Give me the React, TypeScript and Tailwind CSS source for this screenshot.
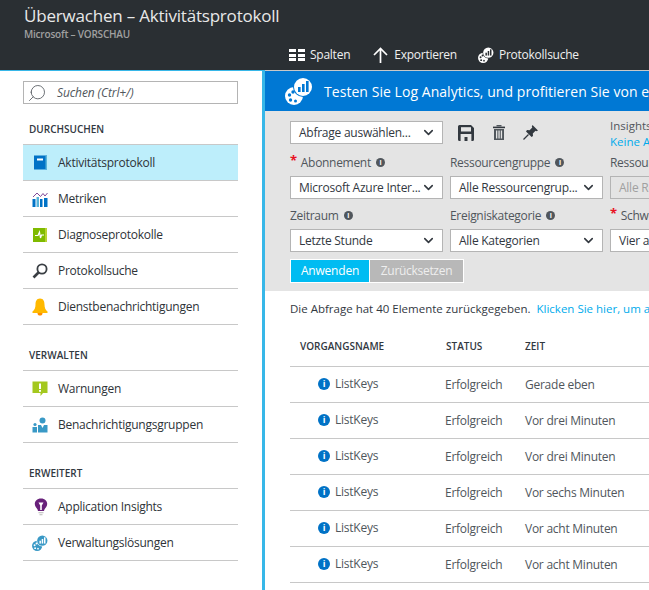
import React from 'react';
import { ChevronDown, Search } from 'lucide-react';

// Log Analytics Symbol: Palette mit Diagramm-Blase
const LogIcon = ({ size, bubble, bars }: { size: number; bubble: string; bars: string }) => (
  <svg width={size} height={size} viewBox="0 0 28 28" className="shrink-0">
    <circle cx="9" cy="19" r="9" fill={bubble} />
    <circle cx="4.5" cy="18" r="1.7" fill={bars} />
    <circle cx="8" cy="15" r="1.7" fill={bars} />
    <circle cx="5.5" cy="23" r="1.7" fill={bars} />
    <circle cx="10.5" cy="24" r="1.5" fill={bars} />
    <circle cx="18" cy="10" r="10" fill={bars} />
    <circle cx="18" cy="10" r="9" fill={bubble} />
    <rect x="13" y="10" width="2.6" height="5" fill={bars} />
    <rect x="17" y="7" width="2.6" height="8" fill={bars} />
    <rect x="21" y="4" width="2.6" height="11" fill={bars} />
  </svg>
);

const BookIcon = () => (
  <svg width="15" height="15" viewBox="0 0 15 15">
    <rect x="1" y="0.5" width="13" height="14" fill="#0072c6" />
    <rect x="12.5" y="0.5" width="1.5" height="14" fill="#59b4d9" />
    <rect x="4" y="3.5" width="6" height="2" fill="#fff" />
  </svg>
);

const MetricsIcon = () => (
  <svg width="16" height="16" viewBox="0 0 16 16">
    <rect x="0.5" y="8" width="3" height="8" fill="#0072c6" />
    <rect x="4.5" y="6" width="2.5" height="10" fill="#59b4d9" />
    <rect x="8" y="8" width="2.5" height="8" fill="#0072c6" />
    <rect x="12" y="7" width="3.5" height="9" fill="#0072c6" />
    <path d="M1 6 L5 2 L8.5 5.5 L11 2.5 L13 5 L15.5 2" fill="none" stroke="#804998" strokeWidth="1" />
  </svg>
);

const DiagnoseIcon = () => (
  <svg width="16" height="16" viewBox="0 0 16 16">
    <rect x="1" y="1" width="14" height="14" fill="#7fba00" />
    <rect x="13" y="1" width="2" height="14" fill="#b8d432" />
    <path d="M3 8.5 H6 L7.5 5 L8.5 11 L9.5 8 H12" fill="none" stroke="#fff" strokeWidth="1.2" />
  </svg>
);

const LoupeIcon = () => (
  <svg width="16" height="16" viewBox="0 0 16 16">
    <circle cx="10" cy="6" r="4.6" fill="#fff" stroke="#3a3f44" strokeWidth="1.8" />
    <path d="M6.5 9.5 L1.5 14.5" stroke="#3a3f44" strokeWidth="2.6" />
  </svg>
);

const BellIcon = () => (
  <svg width="16" height="18" viewBox="0 0 16 18">
    <path d="M8 0.5 C4.5 0.5 3.5 3.5 3.5 6.5 C3.5 10 2.5 12 0.5 13.5 V15 H15.5 V13.5 C13.5 12 12.5 10 12.5 6.5 C12.5 3.5 11.5 0.5 8 0.5 Z" fill="#ffb900" />
    <path d="M5.5 15 C5.5 17 6.5 17.5 8 17.5 C9.5 17.5 10.5 17 10.5 15 Z" fill="#ff8c00" />
  </svg>
);

const WarnIcon = () => (
  <svg width="16" height="16" viewBox="0 0 16 16">
    <path d="M0.5 0.5 H15.5 V12 H11 L8.5 15 V12 H0.5 Z" fill="#a4c81e" />
    <rect x="7" y="2.5" width="2" height="5.5" fill="#fff" />
    <rect x="7" y="9" width="2" height="1.8" fill="#fff" />
  </svg>
);

const GroupIcon = () => (
  <svg width="16" height="16" viewBox="0 0 16 16">
    <circle cx="10.5" cy="3.5" r="3" fill="#3999c6" />
    <path d="M6 8 H15.5 V15.5 H6 Z" fill="#3999c6" />
    <path d="M9 8 L10.5 11 L12 8 Z" fill="#fff" />
    <circle cx="3" cy="7.5" r="1.6" fill="#3999c6" />
    <rect x="0.5" y="10" width="4.5" height="5.5" fill="#3999c6" />
  </svg>
);

const BulbIcon = () => (
  <svg width="14" height="18" viewBox="0 0 14 18">
    <path d="M7 0.5 C3 0.5 0.8 3 0.8 6 C0.8 9 3.5 10 4 13 H10 C10.5 10 13.2 9 13.2 6 C13.2 3 11 0.5 7 0.5 Z" fill="#68217a" />
    <path d="M4.5 4.5 H9.5 L7.8 7.5 V12 H6.2 V7.5 Z" fill="#fff" />
    <rect x="4.5" y="14" width="5" height="1.3" fill="#c8c8c8" />
    <rect x="5.5" y="16" width="3" height="1.3" fill="#c8c8c8" />
  </svg>
);

// Werkzeugleiste im Filterbereich
const SaveIcon = () => (
  <svg width="16" height="16" viewBox="0 0 16 16" className="shrink-0">
    <path d="M1.5 0 H13 L16 3 V14.5 A1.5 1.5 0 0 1 14.5 16 H1.5 A1.5 1.5 0 0 1 0 14.5 V1.5 A1.5 1.5 0 0 1 1.5 0 Z" fill="#32383f" />
    <rect x="3" y="2.2" width="10" height="4.3" fill="#e4e4e4" />
    <rect x="2.6" y="9" width="10.8" height="7" fill="#e4e4e4" />
    <rect x="6.5" y="12" width="3" height="4" fill="#32383f" />
  </svg>
);

const TrashIcon = () => (
  <svg width="12" height="15" viewBox="0 0 12 15" className="shrink-0">
    <rect x="3.5" y="0" width="5" height="1.4" fill="#50565c" />
    <rect x="0" y="1.6" width="12" height="1.6" fill="#32383f" />
    <rect x="1" y="4" width="10" height="11" fill="#50565c" />
    <rect x="3" y="5.5" width="1.3" height="8" fill="#e4e4e4" />
    <rect x="5.4" y="5.5" width="1.3" height="8" fill="#e4e4e4" />
    <rect x="7.8" y="5.5" width="1.3" height="8" fill="#e4e4e4" />
  </svg>
);

const PinIcon = () => (
  <svg width="15" height="15" viewBox="0 0 15 15" className="shrink-0">
    <path d="M9.5 0 L15 5.5 L13.5 6.2 L12.5 5.7 L9.8 8.4 L10 11 L8.6 12 L3 6.4 L4 5 L6.6 5.2 L9.3 2.5 L8.8 1.5 Z" fill="#32383f" />
    <path d="M5.5 9.5 L0.5 14.5" stroke="#32383f" strokeWidth="1.3" />
  </svg>
);

const Row = ({ icon, label, active }: { icon: React.ReactNode; label: string; active?: boolean }) => (
  <div className={`flex h-9 items-center border-b border-[#c8c8c8] ${active ? 'bg-[#bdeefb]' : ''}`}>
    <div className="flex w-[35px] shrink-0 justify-end pr-[10px]">{icon}</div>
    <span className="pt-px text-[12px] tracking-[-0.25px] text-[#2e3338]">{label}</span>
  </div>
);

const Section = ({ title, children }: { title: string; children: React.ReactNode }) => (
  <div>
    <div className="flex h-[23px] items-start border-b border-[#c8c8c8] pl-[6px] text-[10px] leading-[14px] font-semibold text-[#32383f]">
      {title}
    </div>
    {children}
  </div>
);

const Dropdown = ({ value, disabled }: { value: string; disabled?: boolean }) => (
  <div className={`flex h-[23px] w-[153px] shrink-0 items-center justify-between border border-[#b4b4b4] pr-1.5 pl-2 ${disabled ? 'bg-[#e4e4e4]' : 'bg-white'}`}>
    <span className={`text-[12px] tracking-[-0.25px] whitespace-nowrap ${disabled ? 'text-[#a0a0a0]' : 'text-[#32383f]'}`}>{value}</span>
    {!disabled && <ChevronDown size={15} strokeWidth={2.5} className="shrink-0 text-[#32383f]" />}
  </div>
);

const InfoDot = () => (
  <span className="ml-[5px] flex h-[9px] w-[9px] items-center justify-center rounded-full bg-[#50565c] text-[7px] leading-none font-bold text-white">i</span>
);

const Label = ({ text, required, info = true }: { text: string; required?: boolean; info?: boolean }) => (
  <div className="flex h-[23px] w-[153px] shrink-0 items-center text-[12px] tracking-[-0.3px] whitespace-nowrap text-[#50565c]">
    {required && <span className="mr-1 -translate-y-0.5 text-[13px] leading-none font-bold text-[#e81123]">*</span>}
    {text}
    {info && <InfoDot />}
  </div>
);

const rows = ['Gerade eben', 'Vor drei Minuten', 'Vor drei Minuten', 'Vor sechs Minuten', 'Vor acht Minuten', 'Vor acht Minuten'];

export default function App() {
  return (
    <div className="flex h-[590px] w-[649px] flex-col overflow-hidden bg-white font-['Open_Sans','Liberation_Sans',sans-serif]">
      {/* Kopfzeile */}
      <header className="h-[71px] shrink-0 border-b border-[#c8c8c8] bg-[#2a2f33]">
        <div className="pt-1 pl-6 text-[17px] leading-[24px] tracking-[-0.2px] text-[#e8e8e8]">Überwachen – Aktivitätsprotokoll</div>
        <div className="pl-6 text-[10px] leading-[12px] font-semibold tracking-[-0.2px] text-[#a0a0a0]">Microsoft – VORSCHAU</div>
        <div className="mt-[6px] flex h-[18px] items-center pl-[289px] text-[12px] font-medium tracking-[-0.25px] text-[#f0f0f0]">
          <div className="flex items-center gap-[5px]">
            <div className="grid grid-cols-2 gap-x-[2px] gap-y-[1.5px]">
              <span className="h-[3px] w-[7px] bg-white" />
              <span className="h-[3px] w-[7px] bg-white" />
              <span className="h-[3px] w-[7px] bg-white" />
              <span className="h-[3px] w-[7px] bg-white" />
              <span className="h-[3px] w-[7px] bg-white" />
              <span className="h-[3px] w-[7px] bg-white" />
            </div>
            Spalten
          </div>
          <div className="ml-[23px] flex items-center gap-[6px]">
            <svg width="15" height="16" viewBox="0 0 15 16">
              <path d="M7.5 1.5 V16 M1 8 L7.5 1.5 L14 8" fill="none" stroke="#fff" strokeWidth="1.7" />
            </svg>
            Exportieren
          </div>
          <div className="ml-[21px] flex items-center gap-[5px]">
            <LogIcon size={16} bubble="#ffffff" bars="#2a2f33" />
            Protokollsuche
          </div>
        </div>
      </header>

      <div className="flex min-h-0 flex-1">
        {/* Seitenleiste */}
        <aside className="z-10 -mt-px w-[265px] shrink-0 border-t border-r-[3px] border-[#37b7e8] bg-white pt-[10px] pl-[23px]">
          <div className="w-[215px]">
            <div className="flex h-[23px] items-center border border-[#b4b4b4] pl-[3px]">
              <Search size={20} strokeWidth={1} className="-scale-x-100 text-[#50565c]" />
              <span className="ml-[10px] text-[12px] tracking-[-0.1px] text-[#50565c] italic">Suchen (Ctrl+/)</span>
            </div>
            <div className="mt-[18px]">
              <Section title="DURCHSUCHEN">
                <Row active icon={<BookIcon />} label="Aktivitätsprotokoll" />
                <Row icon={<MetricsIcon />} label="Metriken" />
                <Row icon={<DiagnoseIcon />} label="Diagnoseprotokolle" />
                <Row icon={<LoupeIcon />} label="Protokollsuche" />
                <Row icon={<BellIcon />} label="Dienstbenachrichtigungen" />
              </Section>
            </div>
            <div className="mt-[23px]">
              <Section title="VERWALTEN">
                <Row icon={<WarnIcon />} label="Warnungen" />
                <Row icon={<GroupIcon />} label="Benachrichtigungsgruppen" />
              </Section>
            </div>
            <div className="mt-[23px]">
              <Section title="ERWEITERT">
                <Row icon={<BulbIcon />} label="Application Insights" />
                <Row icon={<LogIcon size={16} bubble="#3999c6" bars="#ffffff" />} label="Verwaltungslösungen" />
              </Section>
            </div>
          </div>
        </aside>

        <main className="min-w-0 flex-1 overflow-hidden">
          {/* Hinweisbanner */}
          <div className="flex h-10 items-center bg-[#0078d4] pl-5 whitespace-nowrap">
            <LogIcon size={28} bubble="#ffffff" bars="#0078d4" />
            <span className="ml-[11px] text-[14px] tracking-[0.05px] text-white">Testen Sie Log Analytics, und profitieren Sie von erweiterten Funktionen</span>
          </div>

          {/* Filter */}
          <div className="h-[180px] bg-[#e4e4e4] pt-[10px] pl-[25px]">
            <div className="flex h-[23px] items-center gap-[7px]">
              <Dropdown value="Abfrage auswählen..." />
              <div className="flex w-[153px] shrink-0 items-center pl-2">
                <SaveIcon />
                <span className="ml-[19px]"><TrashIcon /></span>
                <span className="ml-[18px]"><PinIcon /></span>
              </div>
              <div className="shrink-0 translate-y-px text-[11.5px] leading-[16px] whitespace-nowrap">
                <div className="text-[#50565c]">Insights-Abfragen</div>
                <div className="text-[#00abec]">Keine Abfragen</div>
              </div>
            </div>
            <div className="mt-[7px] flex gap-[7px]">
              <Label required text="Abonnement" />
              <Label text="Ressourcengruppe" />
              <Label text="Ressource" info={false} />
            </div>
            <div className="mt-[2px] flex gap-[7px]">
              <Dropdown value="Microsoft Azure Inter..." />
              <Dropdown value="Alle Ressourcengrup..." />
              <Dropdown value="Alle Ressourcen" disabled />
            </div>
            <div className="mt-[5px] flex gap-[7px]">
              <Label text="Zeitraum" />
              <Label text="Ereigniskategorie" />
              <Label required text="Schweregrad" />
            </div>
            <div className="mt-[2px] flex gap-[7px]">
              <Dropdown value="Letzte Stunde" />
              <Dropdown value="Alle Kategorien" />
              <Dropdown value="Vier ausgewählt" />
            </div>
            <div className="mt-[7px] flex h-6 w-[174px] gap-px bg-white p-px">
              <div className="flex w-[78px] items-center justify-center bg-[#00bcf2] text-[12px] font-medium tracking-[-0.2px] text-white">Anwenden</div>
              <div className="flex flex-1 items-center justify-center bg-[#b8b8b8] text-[12px] font-medium tracking-[-0.3px] text-[#eeeeee]">Zurücksetzen</div>
            </div>
          </div>

          {/* Ergebnisliste */}
          <div className="pt-[10px] pl-[25px] text-[11.5px] whitespace-nowrap">
            <div className="h-[16px] leading-[16px]">
              <span className="text-[#32383f]">Die Abfrage hat 40 Elemente zurückgegeben.</span>
              <span className="ml-[6px] text-[#00abec]">Klicken Sie hier, um alle Ereignisse anzuzeigen</span>
            </div>
            <div className="mt-[22px] flex h-[28px] items-start border-b border-[#c8c8c8] text-[10px] leading-[14px] font-semibold text-[#32383f]">
              <span className="w-[156px] pl-[10px]">VORGANGSNAME</span>
              <span className="w-[79px]">STATUS</span>
              <span>ZEIT</span>
            </div>
            {rows.map((time, i) => (
              <div key={i} className="flex h-9 items-center border-b border-[#c8c8c8] text-[12px] tracking-[-0.25px] text-[#50565c]">
                <div className="flex w-[155px] -translate-y-px items-center pl-[28px]">
                  <span className="flex h-3 w-3 items-center justify-center rounded-full bg-[#0072c6] text-[9px] leading-none font-bold text-white">i</span>
                  <span className="ml-[5px]">ListKeys</span>
                </div>
                <span className="w-[80px]">Erfolgreich</span>
                <span>{time}</span>
              </div>
            ))}
          </div>
        </main>
      </div>
    </div>
  );
}
